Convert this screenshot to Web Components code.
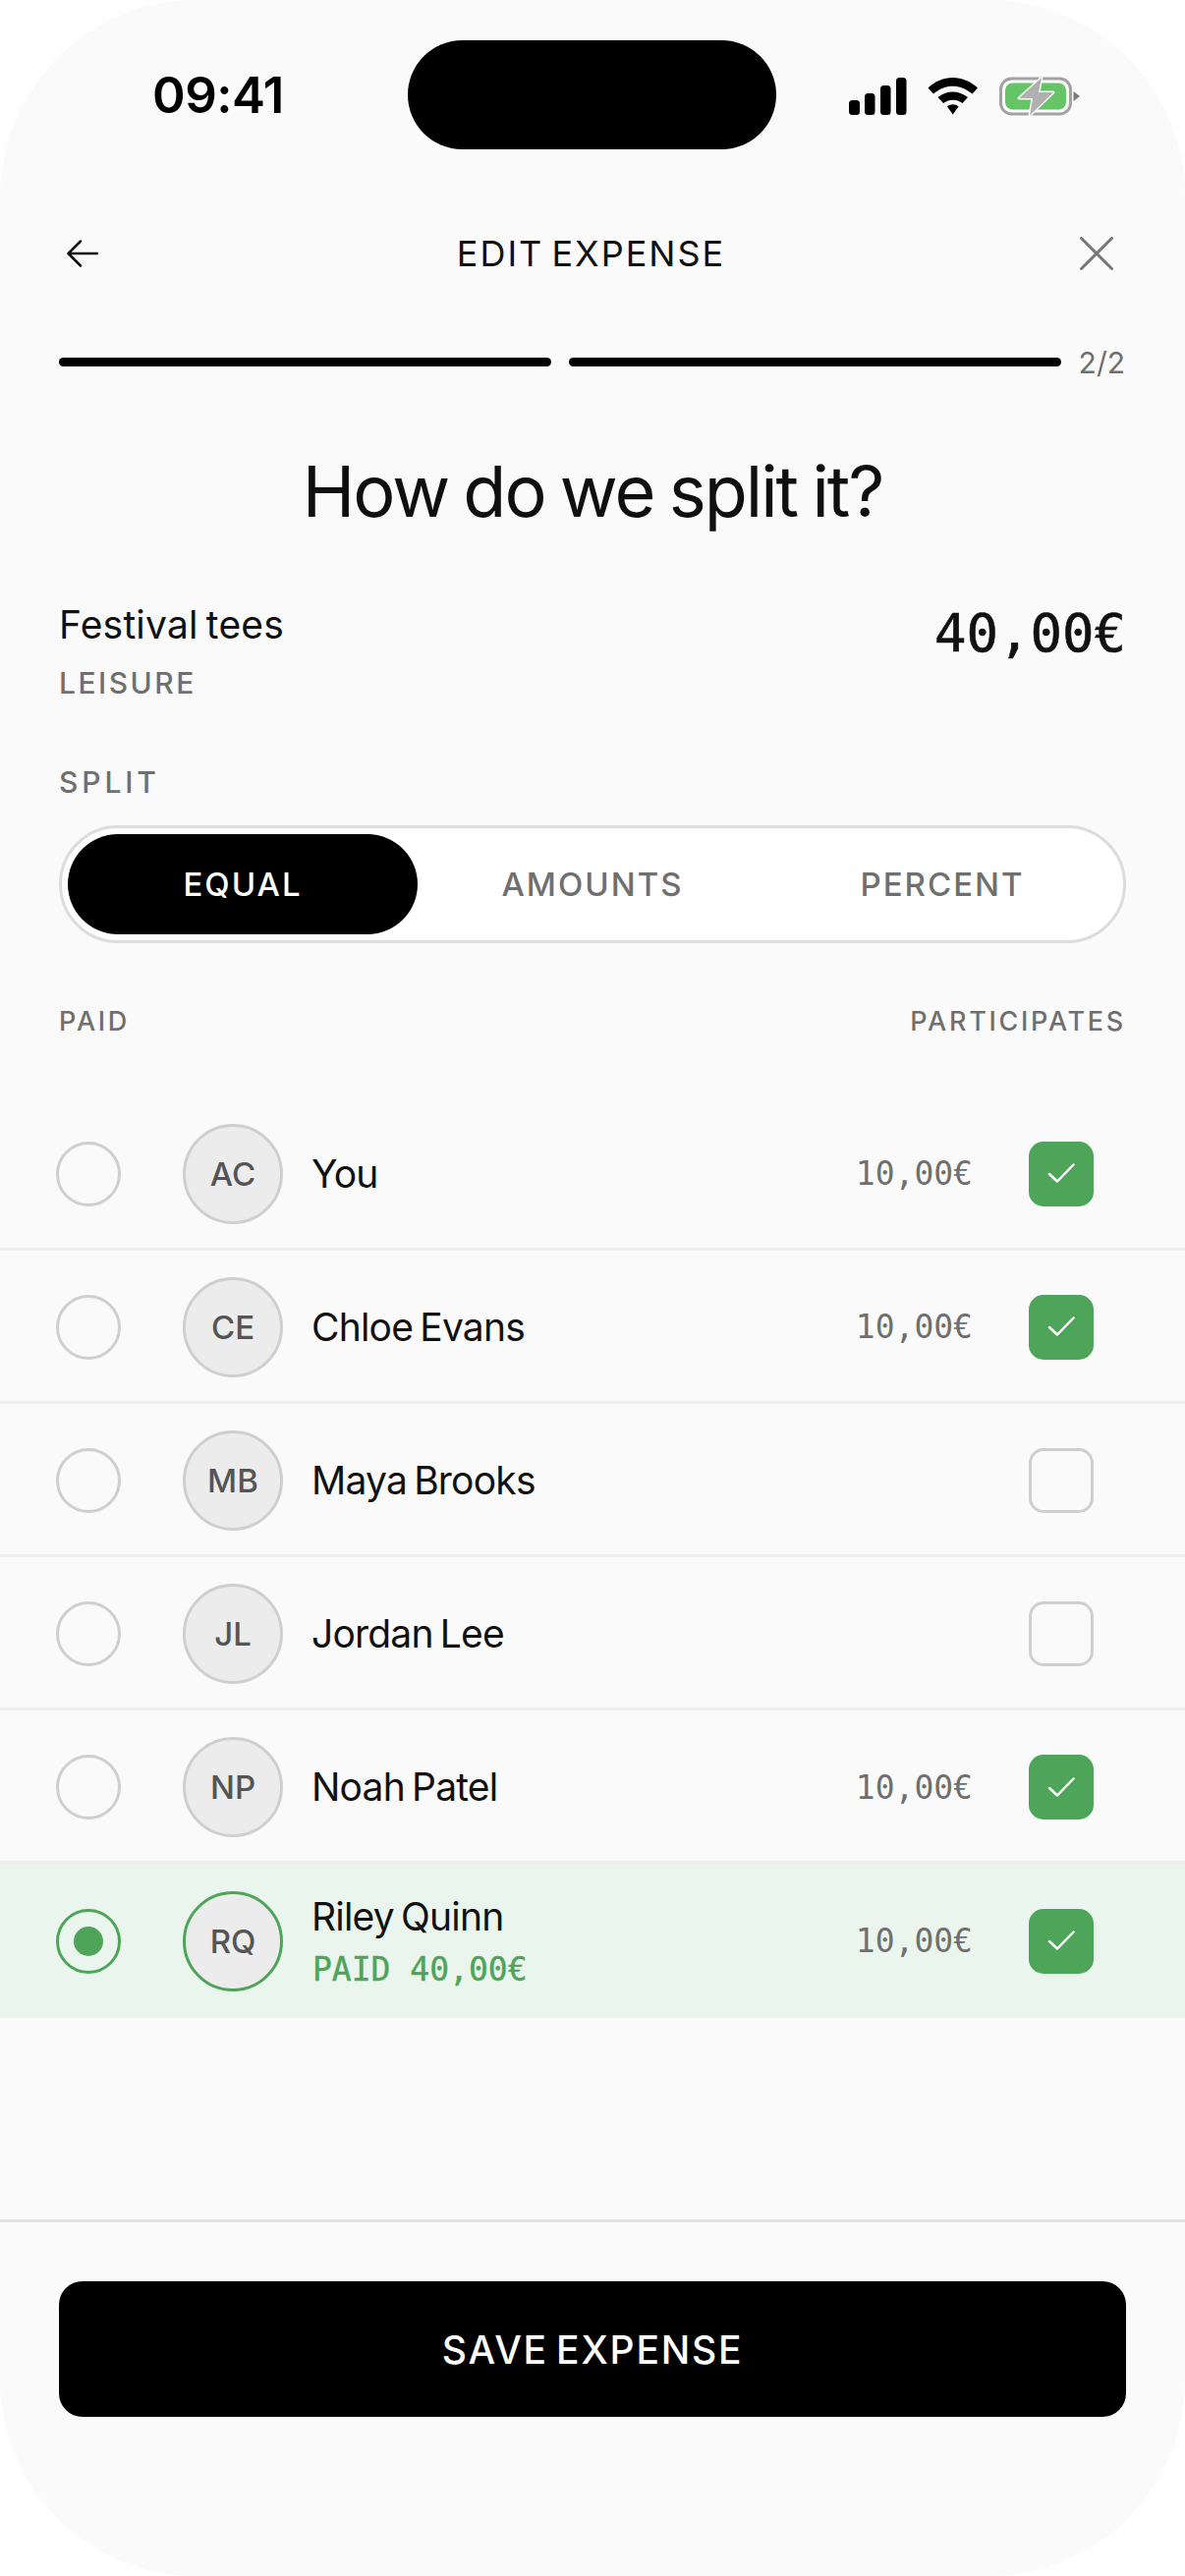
<!DOCTYPE html>
<html>
<head>
<meta charset="utf-8">
<title>Edit expense</title>
<style>
  html, body { margin: 0; padding: 0; background: #fff; }
  body { width: 1206px; height: 2622px; overflow: hidden; font-family: Inter, "Liberation Sans", sans-serif; color: #111; }
</style>
</head>
<body>
<expense-screen>
  <status-bar slot="status"></status-bar>
  <nav-bar slot="nav" title="EDIT EXPENSE"></nav-bar>
  <step-progress slot="progress" label="2/2"></step-progress>
  <expense-summary slot="summary" name="Festival tees" category="LEISURE" amount="40,00€"></expense-summary>
  <split-tabs slot="tabs"></split-tabs>
  <member-row slot="rows" initials="AC" name="You" amount="10,00€" included></member-row>
  <member-row slot="rows" initials="CE" name="Chloe Evans" amount="10,00€" included></member-row>
  <member-row slot="rows" initials="MB" name="Maya Brooks"></member-row>
  <member-row slot="rows" initials="JL" name="Jordan Lee"></member-row>
  <member-row slot="rows" initials="NP" name="Noah Patel" amount="10,00€" included></member-row>
  <member-row slot="rows" initials="RQ" name="Riley Quinn" amount="10,00€" included paid="PAID 40,00€"></member-row>
  <save-footer slot="footer" label="SAVE EXPENSE"></save-footer>
</expense-screen>

<script>
const MONO = `"DejaVu Sans Mono", "Liberation Mono", monospace`;

class ExpenseScreen extends HTMLElement {
    connectedCallback() {
        const shadow = this.attachShadow({ mode: "open" });
        shadow.innerHTML = `
            <style>
                :host {
                    display: flex;
                    flex-direction: column;
                    width: 1206px;
                    height: 2622px;
                    background: #fafafa;
                    border-radius: 200px;
                    overflow: hidden;
                }
                .title {
                    margin: 0;
                    padding-top: 68px;
                    text-align: center;
                    font-size: 72px;
                    line-height: 86px;
                    font-weight: 400;
                    letter-spacing: -2px;
                    word-spacing: -3px;
                    color: #0f0f0f;
                }
                .label {
                    font-size: 30px;
                    line-height: 36px;
                    font-weight: 500;
                    color: #6f6f6f;
                }
                .split-label {
                    padding: 65px 60px 26px;
                    letter-spacing: 3.9px;
                }
                .columns {
                    display: flex;
                    justify-content: space-between;
                    padding: 62.5px 60px 60px;
                    font-size: 27px;
                    line-height: 34px;
                    letter-spacing: 2.7px;
                }
                .rows { display: flex; flex-direction: column; }
                .spacer { flex: 1; }
            </style>
            <slot name="status"></slot>
            <slot name="nav"></slot>
            <slot name="progress"></slot>
            <h1 class="title">How do we split it?</h1>
            <slot name="summary"></slot>
            <div class="label split-label">SPLIT</div>
            <slot name="tabs"></slot>
            <div class="label columns"><span>PAID</span><span>PARTICIPATES</span></div>
            <div class="rows"><slot name="rows"></slot></div>
            <div class="spacer"></div>
            <slot name="footer"></slot>
        `;
    }
}

class StatusBar extends HTMLElement {
    connectedCallback() {
        const shadow = this.attachShadow({ mode: "open" });
        shadow.innerHTML = `
            <style>
                :host {
                    display: flex;
                    align-items: center;
                    height: 111px;
                    margin-top: 41px;
                    padding: 0 106px 0 155px;
                }
                .time {
                    width: 260px;
                    font-size: 51px;
                    font-weight: 600;
                    letter-spacing: -0.5px;
                    color: #000;
                }
                .island {
                    width: 376px;
                    height: 111px;
                    border-radius: 56px;
                    background: #000;
                }
                .icons {
                    display: flex;
                    align-items: center;
                    margin: 4px 0 0 74px;
                }
                svg { display: block; overflow: visible; }
            </style>
            <span class="time">09:41</span>
            <div class="island"></div>
            <div class="icons">
                <svg width="236" height="40" viewBox="0 0 236 40">
                    <rect x="0" y="23" width="11" height="15" rx="3.5"/>
                    <rect x="16" y="16" width="10.5" height="22" rx="3.5"/>
                    <rect x="32" y="8" width="10.5" height="30" rx="3.5"/>
                    <rect x="48" y="0" width="10.5" height="38" rx="3.5"/>
                    <path d="M80.5 10.5 C 95 -3.5, 116 -3.5, 131 10.5 L 125.5 16.5 C 113 6, 98 6, 86 16.5 Z"/>
                    <path d="M90.5 20 C 99 12.5, 112 12.5, 121 20 L 115.5 26 C 110 21.5, 102 21.5, 96 26 Z"/>
                    <path d="M100 29.5 C 103.5 26.5, 108 26.5, 111.5 29.5 L 105.75 37.5 Z"/>
                    <rect x="154.5" y="1" width="71" height="36" rx="11" fill="none" stroke="#a2a2a2" stroke-width="3"/>
                    <rect x="159" y="5.5" width="62" height="27" rx="7.5" fill="#65c466"/>
                    <path d="M228.5 14 L 235 19 L 228.5 24 Z" fill="#7a7a7a"/>
                    <path d="M196 0 L 173 21 L 187 21 L 184 38.5 L 208 15 L 193 15 Z" fill="#b0b0b0" stroke="#fafafa" stroke-width="3" stroke-linejoin="round" paint-order="stroke"/>
                </svg>
            </div>
        `;
    }
}

class NavBar extends HTMLElement {
    connectedCallback() {
        const shadow = this.attachShadow({ mode: "open" });
        shadow.innerHTML = `
            <style>
                :host {
                    display: flex;
                    align-items: center;
                    justify-content: space-between;
                    height: 60px;
                    margin-top: 76px;
                    padding: 0 73px 0 68px;
                }
                .title {
                    font-size: 36px;
                    font-weight: 400;
                    letter-spacing: 2px;
                    word-spacing: -4px;
                    color: #111;
                    margin-left: 4px;
                }
                svg { display: block; fill: none; stroke-linecap: round; stroke-linejoin: round; }
            </style>
            <svg width="32" height="28" viewBox="0 0 32 28" stroke="#111" stroke-width="2.5"><path d="M31 14 H2 M14 1.5 L1.5 14 L14 26.5"/></svg>
            <span class="title">${this.getAttribute("title")}</span>
            <svg width="34" height="34" viewBox="0 0 34 34" stroke="#777" stroke-width="3"><path d="M1.5 1.5 L32.5 32.5 M32.5 1.5 L1.5 32.5"/></svg>
        `;
    }
}

class StepProgress extends HTMLElement {
    connectedCallback() {
        const shadow = this.attachShadow({ mode: "open" });
        shadow.innerHTML = `
            <style>
                :host {
                    display: flex;
                    align-items: center;
                    height: 40px;
                    margin-top: 60.5px;
                    padding: 0 61px 0 60px;
                }
                .bar { width: 501.5px; height: 9px; border-radius: 5px; background: #000; }
                .bar + .bar { margin-left: 18.5px; }
                .label { font-size: 30px; color: #6f6f6f; margin-left: 18px; }
            </style>
            <div class="bar"></div>
            <div class="bar"></div>
            <span class="label">${this.getAttribute("label")}</span>
        `;
    }
}

class ExpenseSummary extends HTMLElement {
    connectedCallback() {
        const shadow = this.attachShadow({ mode: "open" });
        shadow.innerHTML = `
            <style>
                :host {
                    display: flex;
                    justify-content: space-between;
                    padding: 0 60px;
                    margin-top: 69.5px;
                }
                .name { font-size: 39px; line-height: 48px; letter-spacing: 0.2px; word-spacing: -3px; font-weight: 400; color: #111; }
                .category {
                    margin-top: 17px;
                    font-size: 30px;
                    line-height: 36px;
                    font-weight: 500;
                    letter-spacing: 2.5px;
                    color: #6f6f6f;
                }
                .amount {
                    margin-top: 1px;
                    font-family: ${MONO};
                    font-size: 54px;
                    line-height: 64px;
                    color: #111;
                    -webkit-text-stroke: 0.6px #111;
                }
            </style>
            <div>
                <div class="name">${this.getAttribute("name")}</div>
                <div class="category">${this.getAttribute("category")}</div>
            </div>
            <div class="amount">${this.getAttribute("amount")}</div>
        `;
    }
}

class SplitTabs extends HTMLElement {
    connectedCallback() {
        const shadow = this.attachShadow({ mode: "open" });
        shadow.innerHTML = `
            <style>
                :host {
                    display: grid;
                    grid-template-columns: repeat(3, 1fr);
                    height: 120px;
                    box-sizing: border-box;
                    margin: 0 60px;
                    padding: 6px;
                    border: 3px solid #dcdcdc;
                    border-radius: 60px;
                    background: #fff;
                }
                .tab {
                    display: flex;
                    align-items: center;
                    justify-content: center;
                    font-size: 33px;
                    font-weight: 500;
                    letter-spacing: 2px;
                    color: #6f6f6f;
                    border-radius: 51px;
                }
                .tab.active { background: #000; color: #fff; }
            </style>
            <div class="tab active">EQUAL</div>
            <div class="tab">AMOUNTS</div>
            <div class="tab">PERCENT</div>
        `;
    }
}

class MemberRow extends HTMLElement {
    connectedCallback() {
        const shadow = this.attachShadow({ mode: "open" });
        const paid = this.getAttribute("paid");
        const amount = this.getAttribute("amount");
        const included = this.hasAttribute("included");
        shadow.innerHTML = `
            <style>
                :host {
                    display: flex;
                    align-items: center;
                    box-sizing: border-box;
                    height: 156.2px;
                    padding: 3px 57px 0;
                    border-bottom: 3px solid #eeeeee;
                }
                :host([paid]) { background: #eaf5ed; border-bottom: 0; padding-top: 0; }
                .radio {
                    display: flex;
                    align-items: center;
                    justify-content: center;
                    box-sizing: border-box;
                    width: 66px;
                    height: 66px;
                    border-radius: 50%;
                    border: 3px solid #cfcfcf;
                    flex: none;
                }
                :host([paid]) .radio { border-color: #4ea458; }
                .dot { width: 30px; height: 30px; border-radius: 50%; background: #4ea458; }
                .avatar {
                    display: flex;
                    align-items: center;
                    justify-content: center;
                    box-sizing: border-box;
                    width: 102px;
                    height: 102px;
                    margin-left: 63px;
                    border-radius: 50%;
                    border: 3px solid #cfcfcf;
                    background: #ececec;
                    font-size: 33px;
                    font-weight: 500;
                    color: #555;
                    flex: none;
                }
                :host([paid]) .avatar { border-color: #4ea458; }
                .who { flex: 1; margin-left: 29px; }
                .name { font-size: 39px; line-height: 48px; letter-spacing: -0.8px; word-spacing: -3px; color: #111; }
                .paid {
                    font-family: ${MONO};
                    font-size: 33px;
                    line-height: 40px;
                    color: #4ea458;
                    margin-top: 10px;
                    margin-left: 1px;
                    -webkit-text-stroke: 0.4px #4ea458;
                }
                .amount {
                    font-family: ${MONO};
                    font-size: 33px;
                    color: #6f6f6f;
                    margin-right: 57px;
                }
                .check {
                    display: flex;
                    align-items: center;
                    justify-content: center;
                    box-sizing: border-box;
                    width: 66px;
                    height: 66px;
                    margin-right: 36px;
                    border-radius: 15px;
                    border: 3px solid #cfcfcf;
                    flex: none;
                }
                .check.on { background: #4ea458; border: 0; }
                svg { display: block; }
            </style>
            <div class="radio">${paid ? `<div class="dot"></div>` : ""}</div>
            <div class="avatar">${this.getAttribute("initials")}</div>
            <div class="who">
                <div class="name">${this.getAttribute("name")}</div>
                ${paid ? `<div class="paid">${paid}</div>` : ""}
            </div>
            ${amount ? `<span class="amount">${amount}</span>` : ""}
            <div class="check ${included ? "on" : ""}">
                ${included ? `<svg width="28" height="21" viewBox="0 0 28 21" fill="none" stroke="#fff" stroke-width="2.5" stroke-linecap="round" stroke-linejoin="round"><path d="M2 11 L10 18.5 L26.5 1.5"/></svg>` : ""}
            </div>
        `;
    }
}

class SaveFooter extends HTMLElement {
    connectedCallback() {
        const shadow = this.attachShadow({ mode: "open" });
        shadow.innerHTML = `
            <style>
                :host {
                    display: block;
                    height: 363px;
                    box-sizing: border-box;
                    padding: 60px 60px 0;
                    border-top: 3px solid #e4e4e4;
                }
                .button {
                    display: flex;
                    align-items: center;
                    justify-content: center;
                    height: 138px;
                    border-radius: 24px;
                    background: #000;
                    color: #fff;
                    font-size: 39px;
                    font-weight: 500;
                    letter-spacing: 1.8px;
                    word-spacing: -4px;
                }
            </style>
            <div class="button">${this.getAttribute("label")}</div>
        `;
    }
}

customElements.define("expense-screen", ExpenseScreen);
customElements.define("status-bar", StatusBar);
customElements.define("nav-bar", NavBar);
customElements.define("step-progress", StepProgress);
customElements.define("expense-summary", ExpenseSummary);
customElements.define("split-tabs", SplitTabs);
customElements.define("member-row", MemberRow);
customElements.define("save-footer", SaveFooter);
</script>
</body>
</html>
